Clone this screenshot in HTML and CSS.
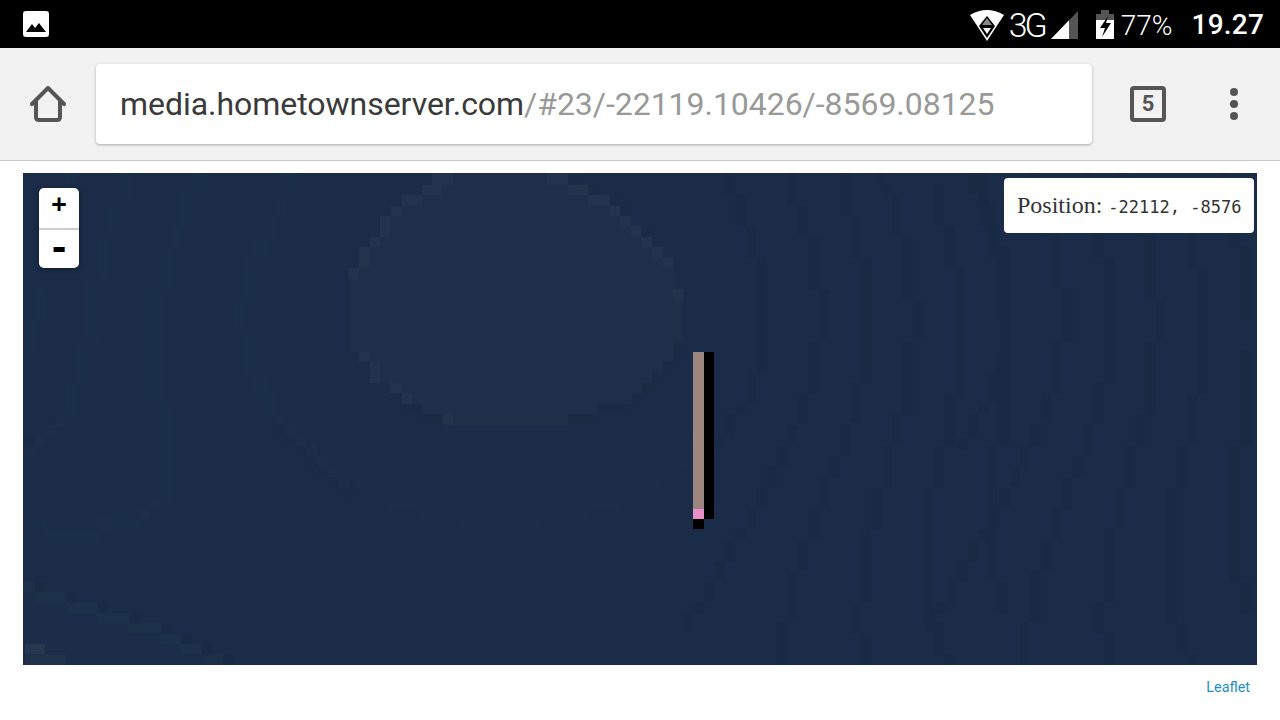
FILE: index.html
```html
<!DOCTYPE html>
<html lang="en">
<head>
<meta charset="utf-8">
<title>Map</title>
<link rel="stylesheet" href="styles.css">
</head>
<body>
<header class="status-bar">
  <svg class="icon-image" width="26" height="26" viewBox="0 0 26 26"><rect width="26" height="26" rx="3" fill="#fff"/><path d="M3 21 L9 13 L12 17 L16 12 L23 21Z" fill="#000"/></svg>
  <div class="status-right">
    <svg class="icon-wifi" width="34" height="32" viewBox="0 0 34 32"><path d="M0 6 Q17 -4 34 6 L17 32Z" fill="#fff"/><path d="M17 7 L25 17 L17 29 L9 17Z" fill="#000"/><path d="M17 9 L22 16 H12Z" fill="#888"/><path d="M13 19 H21 L17 25Z" fill="#fff"/></svg>
    <span class="net">3G</span>
    <svg class="icon-signal" width="27" height="28" viewBox="0 0 27 28"><path d="M0 28 L27 0 V28Z" fill="#555"/><path d="M0 28 L18 9.300 V28Z" fill="#fff"/></svg>
    <svg class="icon-battery" width="18" height="29" viewBox="0 0 18 29"><path d="M5 0 H13 V4 H18 V10 H0 V4 H5Z" fill="#555"/><rect y="10" width="18" height="19" fill="#fff"/><path d="M12 6 L4 18 H9 L6 27 L15 13 H10Z" fill="#000"/></svg>
    <span class="battery">77%</span>
    <span class="clock">19.27</span>
  </div>
</header>

<nav class="toolbar">
  <svg class="icon-home" width="36" height="36" viewBox="0 0 36 36" fill="none" stroke="#555" stroke-width="4" stroke-linecap="round" stroke-linejoin="round"><path d="M2 18 L18 2 L34 18"/><path d="M6 15 V31 Q6 34 9 34 H27 Q30 34 30 31 V15"/></svg>
  <div class="omnibox"><span class="host">media.hometownserver.com</span><span class="path">/#23/-22119.10426/-8569.08125</span></div>
  <div class="tabs">5</div>
  <div class="menu"><i></i><i></i><i></i></div>
</nav>

<main class="page">
  <section class="map">
    <svg class="tiles" width="1234" height="492" viewBox="0 0 1234 492" shape-rendering="crispEdges">
      <!-- coordinates inside the groups are on a 3x grid -->
      <g transform="scale(.33333)">
        <path fill="#1b2e49" d="M290 0h28v95h-28zM255 98h32v92h-32zM225 190h30v125h-30zM192 318h33v185h-33zM162 505h30v122h-30zM130 630h30v95h-30zM100 725h30v25h-30zM507 0h30v65h-30zM475 65h32v95h-32zM443 160h32v60h-32zM413 222h32v125h-32zM380 348h35v345h-35zM413 695h32v287h-32zM790 0h30v65h-30zM757 65h32v65h-32zM726 130h30v62h-30zM695 192h32v63h-32zM663 255h33v125h-33zM633 380h32v95h-32zM663 475h33v125h-33zM695 600h32v62h-32zM726 662h32v60h-32zM757 725h32v25h-32zM35 348h33v92h-33zM5 440h33v95h-33zM130 0h30v30h-30z"/>
      </g>
      <g transform="scale(.33333) translate(0 741)" >
        <path fill="#1b2d48" d="M0 485h37v30h92v32h96v32h93v31h97v32h60v30h62v33h62v30H0z"/>
        <path fill="#182a44" d="M37 485h33v30h-33zM130 517h32v30h-32zM225 548h30v30h-30zM318 580h32v30h-32zM413 610h32v30h-32zM473 642h33v30h-33zM537 672h33v30h-33zM600 705h32v30h-32z"/>
        <path fill="#1d304a" d="M0 485h37v30H0zM37 517h92v30H37zM130 548h95v30h-95zM225 580h92v30h-92zM318 610h95v30h-95zM413 642h60v30h-60zM475 672h62v30h-62zM537 705h62v30h-62z"/>
        <path fill="#27374f" d="M5 672h60v30H5z"/>
        <path fill="#21324c" d="M5 705h124v30H5z"/>
        <path fill="#192b45" d="M68 0h32v14H68zM0 45h35v32H0zM757 15h30v30h-30zM790 45h30v32h-30zM820 78h32v30h-32zM852 108h30v32h-30zM882 140h32v32h-32zM914 172h32v32h-32zM945 205h45v30h-45z"/>
        <path fill="#1c2e49" d="M100 0h30v14h-30zM68 15h32v30H68zM35 45h33v32H35zM0 78h37v30H0zM790 15h30v30h-30zM820 45h30v32h-30zM852 78h30v30h-30zM882 108h32v32h-32zM914 140h32v32h-32zM945 172h33v32h-33zM380 235h33v32h-33zM350 265h32v32h-32zM225 297h32v30h-32z"/>
        <path fill="#1b2e49" d="M257 297h95v30h-95zM0 297h70v30H0zM70 330h160v30H70z"/>
      </g>
      <g transform="translate(297 -3) scale(.33333)">
        <path fill="#1b2d48" d="M0 840h20v60h30v30h60v30h40v30h60v30h90v30h130v30h220v-30h150v-30h100v-30h60v-30h60v-30h60v-30h25v-60h30V800H0z"/>
        <path fill="#1e2f4a" d="M370 10H745V45H805V76H870V107H900V138H930V170H960V201H995V232H1028V263H1058V357H1090V514H1060V576H1028V607H995V638H965V670H935V701H835V732H745V765H370V732H305V701H245V670H210V638H150V576H118V545H88V294H118V232H150V201H180V138H212V107H245V76H305V45H370Z"/>
        <path fill="#22334d" d="M337 10h63v35h-63zM305 45h60v31h-60zM245 76h60v31h-60zM212 107h30v31h-30zM180 138h30v62h-30zM150 201h30v31h-30zM118 232h30v62h-30zM88 294h30v33h-30zM118 545h30v31h-30zM150 576h30v62h-30zM210 638h33v32h-33zM245 670h30v31h-30zM370 732h30v33h-30zM680 10h63v35h-63zM745 45h60v31h-60zM805 76h65v31h-65zM870 107h30v31h-30zM900 138h33v31h-33zM933 169h30v32h-30zM963 201h32v31h-32zM995 232h33v31h-33zM1028 263h30v31h-30zM1058 357h32v32h-32z"/>
        <path fill="#192b45" d="M745 10h28v35h-28zM805 45h33v31h-33zM870 76h30v31h-30zM900 107h33v31h-33zM965 170h30v31h-30zM1060 514h30v62h-30zM1028 576h32v31h-32zM995 607h33v31h-33zM965 638h33v32h-33zM935 670h28v31h-28zM835 701h95v31h-95zM745 732h90v33h-90zM245 701h60v31h-60zM305 732h65v33h-65z"/>
      </g>
      <g transform="translate(657 0) scale(.33333)">
        <path id="bands" fill="#182a44" d="M135 0h30v65h-30zM165 65h32v95h-32zM198 160h30v95h-30zM230 255h32v345h-32zM198 600h30v92h-30zM165 692h32v30h-32zM135 722h30v73h-30zM102 795h32v32h-32zM322 0h30v98h-30zM355 98h30v92h-30zM385 190h33v158h-33zM418 348h32v157h-32zM385 505h32v155h-32zM355 662h30v88h-30zM322 756h32v60h-32zM290 819h32v62h-32zM262 881h30v62h-30zM228 946h32v60h-32zM198 1006h30v62h-30zM165 1068h32v32h-32zM135 1101h30v62h-30zM102 1163h32v62h-32zM72 1226h30v62h-30zM40 1289h32v32h-32zM10 1319h30v62H10zM480 0h32v130h-32zM510 130h32v125h-32zM543 255h32v375h-32zM510 630h32v120h-32zM480 756h30v92h-30zM447 849h32v62h-32zM418 911h30v97h-30zM385 1006h32v95h-32zM355 1101h30v92h-30zM322 1193h32v155h-32zM290 1349h30v127h-30zM637 65h30v125h-30zM667 190h32v190h-32zM700 380h30v125h-30zM667 505h32v220h-32zM637 722h30v97h-30zM605 819h30v125h-30zM573 946h32v122h-32zM543 1068h30v222h-30zM510 1289h32v92h-32zM543 1381h30v95h-30zM763 35h30v125h-30zM793 160h32v125h-32zM825 285h30v378h-30zM793 663h32v156h-32zM762 819h30v125h-30zM730 946h32v405h-32zM762 1349h30v97h-30zM793 1446h32v30h-32zM890 0h30v98h-30zM918 98h32v125h-32zM950 222h40v220h-40zM950 535h40v284h-40zM918 819h32v407h-32zM950 1226h35v95h-35zM585 0h32v35h-32zM605 35h30v30h-30z"/>
      </g>
      <g transform="translate(900 0) scale(.33333)">
        <use href="#bands"/>
      </g>
      <rect x="670" y="179" width="11" height="157" fill="#9c8680"/>
      <rect x="670" y="336" width="11" height="10" fill="#e88fc9"/>
      <rect x="670" y="346" width="11" height="10" fill="#000"/>
      <rect x="681" y="179" width="10" height="167" fill="#000"/>
    </svg>
    <div class="zoom">
      <a class="zoom-btn">+</a>
      <a class="zoom-btn zoom-out">-</a>
    </div>
    <div class="position">Position: <code>-22112, -8576</code></div>
  </section>
  <footer class="attribution"><a>Leaflet</a></footer>
</main>
</body>
</html>
```

FILE: styles.css
```css
* { box-sizing: border-box; }
html, body { margin: 0; height: 100%; overflow: hidden; background: #fff; }
body { width: 1280px; height: 720px; font-family: Roboto, sans-serif; display: flex; flex-direction: column; }

.status-bar { height: 48px; background: #000; color: #fff; display: flex; align-items: center; justify-content: space-between; padding: 0 16px 0 23px; flex: none; }
.icon-image { display: block; }
.status-right { display: flex; align-items: center; }
.icon-wifi { display: block; margin-right: 5px; margin-top: 2px; }
.net { font-size: 34px; font-weight: 300; letter-spacing: -3px; line-height: 48px; margin-right: 6px; padding-top: 1px; }
.icon-signal { display: block; margin-top: 2px; margin-right: 18px; }
.icon-battery { display: block; margin-right: 7px; }
.battery { font-size: 28px; font-weight: 300; line-height: 48px; margin-right: 19px; padding-top: 3px; }
.clock { font-size: 28px; font-weight: 500; line-height: 48px; letter-spacing: .2px; padding-top: 2px; }

.toolbar { height: 113px; background: #f2f2f2; border-bottom: 1px solid #c9c7ca; display: flex; align-items: center; padding: 0 0 1px 30px; flex: none; }
.icon-home { display: block; flex: none; margin-right: 30px; }
.omnibox { width: 996px; height: 80px; background: #fff; border-radius: 4px; box-shadow: 0 1px 3px rgba(0,0,0,.3); padding-left: 24px; font-size: 32px; letter-spacing: -.04px; line-height: 80px; white-space: nowrap; flex: none; margin-right: 38px; }
.host { color: #3a3a3a; }
.path { color: #999; }
.tabs { width: 36px; height: 36px; border: 4px solid #555; border-radius: 4px; color: #555; font-size: 22px; font-weight: 700; text-align: center; line-height: 27px; flex: none; margin-right: 64px; }
.menu { display: flex; flex-direction: column; gap: 4px; }
.menu i { display: block; width: 8px; height: 8px; border-radius: 50%; background: #555; }

.page { flex: 1; padding: 12px 23px 0; }
.map { position: relative; width: 1234px; height: 492px; background: #1a2c47; overflow: hidden; }
.tiles { display: block; }
.zoom { position: absolute; left: 16px; top: 15px; width: 40px; background: #fff; border-radius: 5px; box-shadow: 0 1px 5px rgba(0,0,0,.4); display: flex; flex-direction: column; }
.zoom-btn { display: block; height: 40px; text-align: center; color: #000; font: 700 25px/32px "DejaVu Sans Mono", monospace; }
.zoom-out { border-top: 2px solid #ccc; font-size: 36px; line-height: 36px; overflow: hidden; }
.position { position: absolute; right: 3px; top: 5px; width: 250px; height: 55px; background: #fff; border-radius: 4px; padding-left: 13px; color: #333; font: 24px/54px "Liberation Serif", serif; white-space: nowrap; }
.position code { font: 17px "DejaVu Sans Mono", monospace; }
.attribution { text-align: right; padding: 15px 7px 0 0; font-size: 14.4px; line-height: 16px; }
.attribution a { color: #1f8fbf; }
```
